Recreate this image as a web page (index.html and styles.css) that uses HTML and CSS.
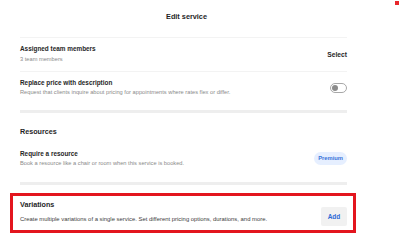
FILE: index.html
```html
<!DOCTYPE html>
<html lang="en">
<head>
    <meta charset="UTF-8" />
    <meta name="viewport" content="width=device-width, initial-scale=1" />
    <title>Edit service</title>
    <link rel="stylesheet" href="styles.css">
</head>
<body>
    <div class="corner-mark"></div>

    <div class="page">
        <header class="title">Edit service</header>

        <section class="group">
            <div class="row row-team">
                <div class="info">
                    <div class="label">Assigned team members</div>
                    <div class="hint">3 team members</div>
                </div>
                <button class="link">Select</button>
            </div>
            <div class="row row-price">
                <div class="info">
                    <div class="label">Replace price with description</div>
                    <div class="hint">Request that clients inquire about pricing for appointments where rates flex or differ.</div>
                </div>
                <div class="toggle"><span class="knob"></span></div>
            </div>
        </section>

        <section class="group resources">
            <h2>Resources</h2>
            <div class="row row-resource">
                <div class="info">
                    <div class="label">Require a resource</div>
                    <div class="hint">Book a resource like a chair or room when this service is booked.</div>
                </div>
                <span class="badge">Premium</span>
            </div>
        </section>

        <section class="highlight">
            <div class="row">
                <div class="info">
                    <h2>Variations</h2>
                    <div class="hint dark">Create multiple variations of a single service. Set different pricing options, durations, and more.</div>
                </div>
                <button class="add">Add</button>
            </div>
        </section>
    </div>
</body>
</html>
```

FILE: styles.css
```css
body {
    margin: 0;
    background: #ffffff;
    font-family: 'Liberation Sans', Arial, sans-serif;
    color: #262626;
}

.corner-mark {
    position: absolute;
    top: 1px;
    right: 0;
    width: 4px;
    height: 4px;
    background: #e8262b;
}

.page {
    width: 327px;
    margin-left: 20px;
}

.title {
    height: 25px;
    padding-top: 12px;
    padding-left: 6px;
    line-height: 10px;
    font-size: 7.3px;
    font-weight: bold;
    text-align: center;
    color: #1f1f1f;
    border-bottom: 1px solid #f3f3f3;
}

.group { border-bottom: 3px solid #eeeeee; }

.row {
    display: flex;
    align-items: center;
    justify-content: space-between;
}

.row-team {
    padding: 6px 0 7px;
    border-bottom: 1px solid #f3f3f3;
}
.row-team .hint { margin-top: 2px; }

.row-price { padding: 6px 0 13px; }
.row-price .hint { margin-top: 1px; }

.resources { padding-top: 14px; }
.row-resource { padding: 12px 0 14px; }
.row-resource .hint { margin-top: 1px; }

.label {
    font-size: 6.4px;
    font-weight: bold;
    line-height: 9px;
    color: #262626;
}
.hint {
    font-size: 5.7px;
    line-height: 9px;
    color: #8a8a8a;
}
.hint.dark {
    font-size: 5.9px;
    color: #3d3d3d;
}

h2 {
    margin: 0;
    font-size: 7.2px;
    line-height: 10px;
    color: #1f1f1f;
}

button {
    border: none;
    background: none;
    padding: 0;
    font-family: inherit;
    font-weight: bold;
    cursor: pointer;
}
.link {
    font-size: 6.7px;
    color: #262626;
}

.toggle {
    box-sizing: border-box;
    width: 17px;
    height: 10px;
    border: 1px solid #a8a8a8;
    border-radius: 5px;
    display: flex;
    align-items: center;
    padding-left: 1px;
}
.knob {
    width: 6px;
    height: 6px;
    border-radius: 50%;
    background: #8c8c8c;
}

.badge {
    background: #e6efff;
    color: #3b73d9;
    font-size: 5.8px;
    font-weight: bold;
    line-height: 13px;
    padding: 0 4px;
    border-radius: 7px;
}

.highlight {
    margin: 8px -9px 0 -10px;
    border: 3px solid #e3151e;
    padding: 4px 6px 4px 7px;
}
.highlight .row { align-items: flex-end; }
.highlight .info { padding-bottom: 2px; }
.highlight .hint {
    margin-top: 4px;
    line-height: 10px;
}

.add {
    width: 26px;
    height: 19px;
    border-radius: 2px;
    background: #f1f1f1;
    color: #2f6ad6;
    font-size: 6.5px;
}
```
